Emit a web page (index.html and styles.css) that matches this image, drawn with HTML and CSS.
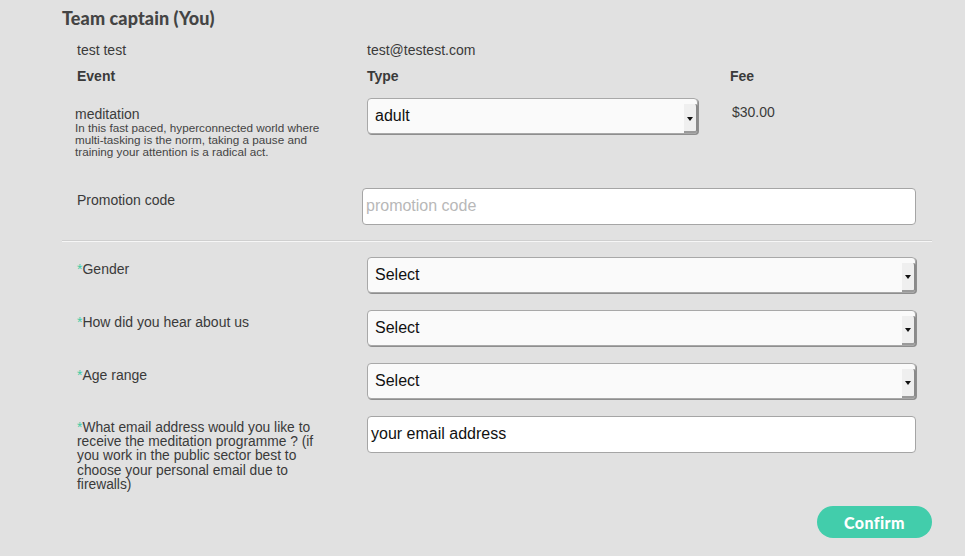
FILE: index.html
```html
<!DOCTYPE html>
<html>
<head>
<meta charset="utf-8">
<link rel="stylesheet" href="styles.css">
</head>
<body>
<div class="page">
  <h2 class="title">Team captain (You)</h2>

  <div class="row3 info">
    <div>test test</div>
    <div>test@testest.com</div>
    <div></div>
  </div>
  <div class="row3 heads">
    <div>Event</div>
    <div>Type</div>
    <div>Fee</div>
  </div>
  <div class="row3 event">
    <div class="event-text">
      <div class="event-name">meditation</div>
      <div class="event-desc">In this fast paced, hyperconnected world where multi-tasking is the norm, taking a pause and training your attention is a radical act.</div>
    </div>
    <div>
      <div class="select type-select"><span>adult</span><span class="arrow"><i></i></span></div>
    </div>
    <div class="fee">$30.00</div>
  </div>

  <div class="promo">
    <div class="label promo-label">Promotion code</div>
    <div class="input promo-input"><span class="placeholder">promotion code</span></div>
  </div>

  <div class="divider"></div>

  <div class="field">
    <div class="label"><span class="req">*</span>Gender</div>
    <div class="select"><span>Select</span><span class="arrow"><i></i></span></div>
  </div>
  <div class="field">
    <div class="label"><span class="req">*</span>How did you hear about us</div>
    <div class="select"><span>Select</span><span class="arrow"><i></i></span></div>
  </div>
  <div class="field">
    <div class="label"><span class="req">*</span>Age range</div>
    <div class="select"><span>Select</span><span class="arrow"><i></i></span></div>
  </div>
  <div class="field email-field">
    <div class="label email-label"><span class="req">*</span>What email address would you like to receive the meditation programme ? (if you work in the public sector best to choose your personal email due to firewalls)</div>
    <div class="input email-input"><span>your email address</span></div>
  </div>

  <div class="actions">
    <button class="confirm">Confirm</button>
  </div>
</div>
</body>
</html>
```

FILE: styles.css
```css
html, body {
  margin: 0;
  padding: 0;
  background: #e1e1e1;
}
body {
  font-family: "Liberation Sans", Arial, sans-serif;
  color: #3c3c3c;
  width: 965px;
  height: 556px;
  overflow: hidden;
}
.page {
  margin-left: 62px;
  width: 870px;
  padding-top: 8px;
}
.title {
  margin: 0;
  font-family: "Lato", "DejaVu Sans", sans-serif;
  font-weight: 900;
  font-size: 18px;
  line-height: 20px;
  color: #444;
  letter-spacing: 0.1px;
}
.row3 {
  display: grid;
  grid-template-columns: 290px 363px 1fr;
  padding-left: 15px;
  font-size: 14px;
}
.info {
  margin-top: 14px;
  line-height: 16px;
  color: #3a3a3a;
}
.heads {
  margin-top: 10px;
  line-height: 16px;
  font-weight: bold;
  color: #3a3a3a;
}
.event {
  margin-top: 14px;
}
.event-text {
  margin-left: -2px;
  padding-top: 9px;
  width: 265px;
}
.event-name {
  font-size: 14px;
  line-height: 15px;
}
.event-desc {
  font-size: 11.7px;
  line-height: 12.2px;
  color: #444;
}
.fee {
  padding-left: 2px;
  padding-top: 6px;
  font-size: 14px;
  line-height: 16px;
  color: #3a3a3a;
}
.select {
  position: relative;
  box-sizing: border-box;
  height: 36px;
  width: 549px;
  background: #fafafa;
  border: 1px solid #a8a8a8;
  border-radius: 4px;
  display: flex;
  align-items: center;
  padding-left: 7px;
  font-size: 16px;
  color: #111;
  box-shadow: 1px 1px 0 #8e8e8e;
}
.type-select {
  width: 331px;
}
.select .arrow {
  margin-left: auto;
  align-self: stretch;
  width: 12px;
  margin-top: 5px;
  background: #efefef;
  border-right: 2px solid #8a8a8a;
  border-bottom: 2px solid #9a9a9a;
  border-radius: 0 3px 3px 0;
  display: flex;
  align-items: center;
  justify-content: center;
  margin-right: -1px;
}
.select .arrow i {
  display: block;
  width: 0;
  height: 0;
  border-left: 3px solid transparent;
  border-right: 3px solid transparent;
  border-top: 4px solid #111;
  margin-top: 2px;
}
.promo {
  display: grid;
  grid-template-columns: 285px 1fr;
  margin-top: 29px;
  padding-left: 15px;
}
.label {
  font-size: 14px;
  line-height: 16px;
  color: #3a3a3a;
}
.promo-label {
  padding-top: 4px;
}
.input {
  box-sizing: border-box;
  height: 37px;
  background: #fff;
  border: 1px solid #a5a5a5;
  border-radius: 4px;
  display: flex;
  align-items: center;
  font-size: 16px;
  color: #111;
}
.promo-input {
  width: 554px;
  padding-left: 3px;
}
.placeholder {
  color: #b8b8b8;
}
.divider {
  margin-top: 15px;
  height: 0;
  border-top: 1px solid #cfcfcf;
  border-bottom: 1px solid #f6f6f6;
}
.field {
  display: grid;
  grid-template-columns: 290px 549px;
  padding-left: 15px;
  margin-top: 15px;
}
.field + .field {
  margin-top: 17px;
}
.field .label {
  padding-top: 4px;
}
.req {
  color: #3ecca6;
}
.email-label {
  font-size: 13.8px;
  line-height: 14.4px;
  padding-top: 5px !important;
  width: 260px;
}
.email-input {
  width: 549px;
  padding-left: 3px;
  height: 37px;
}
.actions {
  display: flex;
  justify-content: flex-end;
  margin-top: 13px;
}
.confirm {
  width: 115px;
  height: 32px;
  border: none;
  border-radius: 16px;
  background: #42cdab;
  color: #fff;
  font-family: "Lato", "DejaVu Sans", sans-serif;
  font-weight: 900;
  font-size: 16px;
  letter-spacing: 0.4px;
  padding: 0;
  padding-top: 1px;
}
```
